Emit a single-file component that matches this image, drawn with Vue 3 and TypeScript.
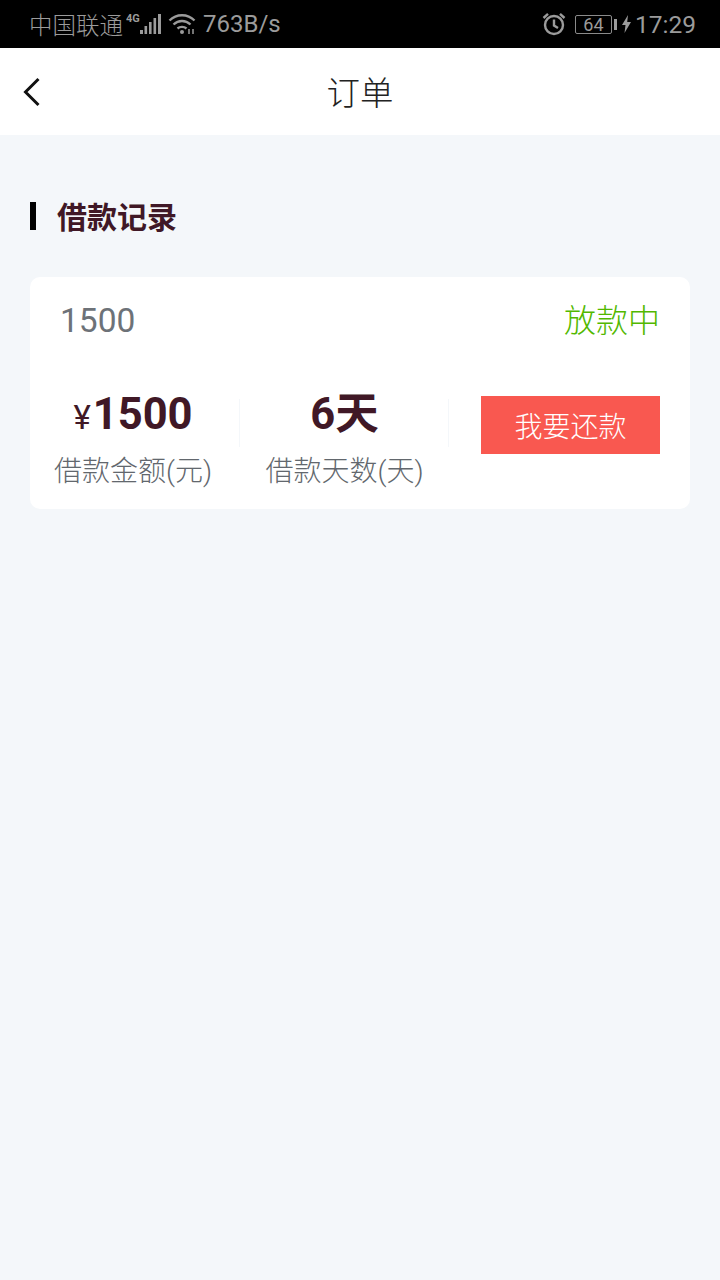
<script setup lang="ts">
const title = '订单'
const section = '借款记录'
const order = { amount: '1500', days: '6', status: '放款中' }
</script>

<template>
  <div class="page">
    <div class="status">
      <div class="status-left">
        <span class="carrier">中国联通</span>
        <svg class="signal" width="36" height="26" viewBox="0 0 36 26">
          <text x="0" y="11" class="net">4G</text>
          <rect x="14" y="19" width="3" height="4" />
          <rect x="18.5" y="15" width="2.6" height="8" />
          <rect x="23" y="11" width="2.6" height="12" />
          <rect x="27.5" y="7" width="2.6" height="16" />
          <rect x="32" y="3" width="3" height="20" />
        </svg>
        <svg class="wifi" width="28" height="24" viewBox="0 0 28 24" fill="none" stroke="#9b9b9b" stroke-width="2.4">
          <path d="M1.5 8.5C8.5 1.5 19.5 1.5 26.5 8.5" />
          <path d="M5.5 12.5C10.5 7.8 17.5 7.8 22.5 12.5" />
          <path d="M9.5 16.5C12 14.3 16 14.3 18.5 16.5" />
          <circle cx="14" cy="20" r="2" fill="#9b9b9b" stroke="none" />
          <path d="M21 17v5M25 17v5" stroke-width="1.5" />
        </svg>
        <span class="speed">763B/s</span>
      </div>
      <div class="status-right">
        <svg width="26" height="26" viewBox="0 0 26 26" fill="none" stroke="#9b9b9b" stroke-width="2.4">
          <circle cx="13" cy="14" r="9" />
          <path d="M13 8.5V14.5L17 17" />
          <path d="M2.5 7L7 2.8M23.5 7L19 2.8" />
        </svg>
        <div class="battery"><span>64</span></div>
        <div class="battery-cap"></div>
        <svg class="bolt" width="9" height="18" viewBox="0 0 9 18">
          <path d="M6 0L0 10H3.5L2.5 18L9 7H5.2Z" fill="#9b9b9b" />
        </svg>
        <span class="time">17:29</span>
      </div>
    </div>

    <header class="nav">
      <svg class="back" width="18" height="30" viewBox="0 0 18 30" fill="none" stroke="#111" stroke-width="3">
        <path d="M15.5 2L2.5 15L15.5 28" />
      </svg>
      <h1>{{ title }}</h1>
    </header>

    <main class="content">
      <div class="heading">
        <i class="mark"></i>
        <h2>{{ section }}</h2>
      </div>

      <section class="card">
        <div class="card-top">
          <span class="num">{{ order.amount }}</span>
          <span class="state">{{ order.status }}</span>
        </div>
        <div class="card-bottom">
          <div class="stat">
            <div class="value"><small>¥</small>{{ order.amount }}</div>
            <div class="label">借款金额(元)</div>
          </div>
          <div class="stat">
            <div class="value">{{ order.days }}天</div>
            <div class="label">借款天数(天)</div>
          </div>
          <button class="repay" type="button">我要还款</button>
        </div>
      </section>
    </main>
  </div>
</template>

<style scoped>
.page {
  width: 720px;
  height: 1280px;
  display: flex;
  flex-direction: column;
  background: #f4f7fa;
  font-family: Roboto, "Noto Sans CJK SC", sans-serif;
  overflow: hidden;
}
.status {
  height: 48px;
  flex: none;
  background: #000;
  color: #9b9b9b;
  display: flex;
  align-items: center;
  justify-content: space-between;
  padding: 0 24px 0 29px;
  font-size: 24px;
}
.status-left,
.status-right {
  display: flex;
  align-items: center;
}
.carrier {
  font-size: 23.5px;
  font-weight: 300;
}
.signal {
  margin-left: 3px;
  fill: #9b9b9b;
}
.net {
  font-family: Roboto, sans-serif;
  font-size: 11px;
  font-weight: 700;
}
.wifi {
  margin-left: 6px;
}
.speed {
  margin-left: 7px;
}
.battery {
  width: 37px;
  height: 19px;
  margin-left: 8px;
  border: 1px solid #8a8a8a;
  border-radius: 2px;
  box-sizing: border-box;
  display: flex;
  align-items: center;
  justify-content: center;
  font-size: 18px;
}
.battery-cap {
  width: 3px;
  height: 11px;
  margin-left: 2px;
  background: #9b9b9b;
}
.bolt {
  margin-left: 5px;
}
.time {
  margin-left: 4px;
  font-size: 24.5px;
}
.nav {
  height: 87px;
  flex: none;
  background: #fff;
  position: relative;
  display: flex;
  align-items: center;
  justify-content: center;
}
.back {
  position: absolute;
  left: 23px;
  top: 29px;
}
.nav h1 {
  margin: -3px 0 0;
  font-size: 33.5px;
  font-weight: 300;
  color: #222;
}
.content {
  padding: 67px 30px 0;
}
.heading {
  display: flex;
  align-items: center;
  height: 28px;
}
.mark {
  width: 6px;
  height: 28px;
  background: #000;
}
.heading h2 {
  margin: 3px 0 0 21px;
  font-size: 30px;
  line-height: 28px;
  font-weight: 700;
  color: #401826;
}
.card {
  margin-top: 47px;
  height: 232px;
  background: #fff;
  border-radius: 10px;
  box-sizing: border-box;
}
.card-top {
  display: flex;
  justify-content: space-between;
  align-items: center;
  padding: 24px 30px 0 30px;
  height: 40px;
}
.num {
  font-size: 33.5px;
  line-height: 40px;
  font-weight: 400;
  color: #6d7278;
}
.state {
  font-size: 32px;
  line-height: 40px;
  font-weight: 300;
  color: #52b800;
}
.card-bottom {
  margin-top: 55px;
  display: flex;
  align-items: flex-start;
  padding-right: 30px;
}
.stat {
  width: 210px;
  flex: none;
  position: relative;
  text-align: center;
  padding-right: 4px;
  box-sizing: border-box;
}
.stat::after {
  content: "";
  position: absolute;
  right: 0;
  top: 3px;
  width: 1px;
  height: 48px;
  background: #f4f7fa;
}
.stat + .stat {
  width: 209px;
  padding-right: 0;
}
.value {
  margin-top: -1px;
  font-size: 43.5px;
  line-height: 40px;
  font-weight: 700;
  color: #401826;
  height: 40px;
}
.value small {
  margin-right: 2px;
  font-size: 33px;
  font-weight: 400;
}
.label {
  margin-top: 19px;
  font-size: 28px;
  line-height: 36px;
  font-weight: 300;
  color: #62676d;
}
.repay {
  width: 179px;
  height: 58px;
  margin-left: 32px;
  flex: none;
  border: 0;
  padding: 0;
  background: #f95850;
  color: #fff;
  font: inherit;
  font-size: 28px;
  font-weight: 300;
}
</style>
